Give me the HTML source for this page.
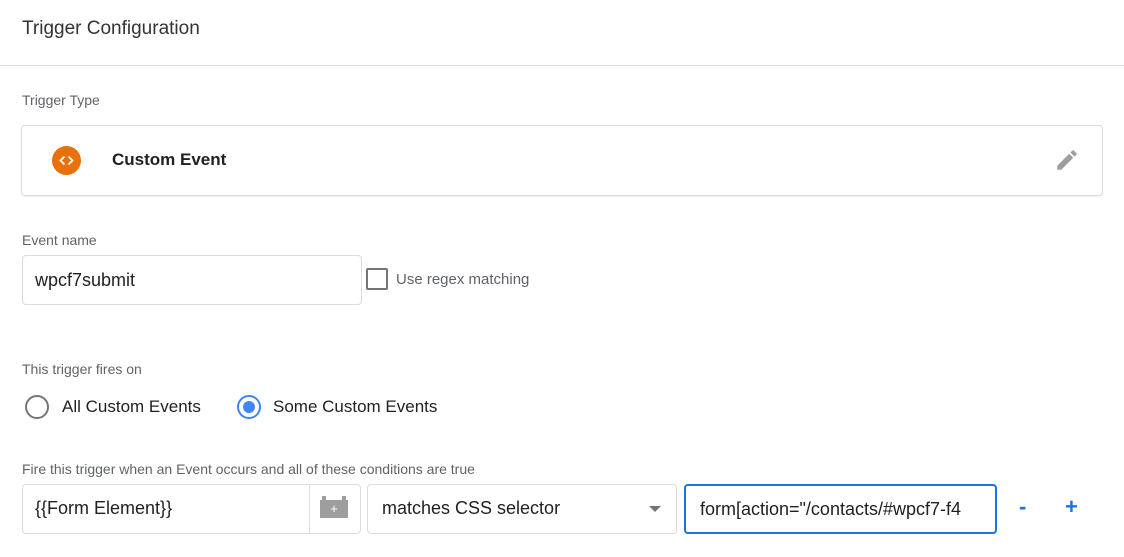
<!DOCTYPE html>
<html><head><style>
body{margin:0;width:1124px;height:557px;background:#fff;font-family:"Liberation Sans",Arial,sans-serif;position:relative;overflow:hidden;color:#202124}
.a{position:absolute}
.lbl{font-size:14px;color:#5f6368}
.box{position:absolute;border:1px solid #dadce0;border-radius:4px;box-sizing:border-box;background:#fff}
</style></head><body>
<div class="a" style="left:22px;top:18px;font-size:19px;color:#333">Trigger Configuration</div>
<div class="a" style="left:0;top:65px;width:1124px;height:1px;background:#dadce0"></div>
<div class="a lbl" style="left:22px;top:92px">Trigger Type</div>
<div class="box" style="left:21px;top:125px;width:1082px;height:71px;box-shadow:0 1px 1px rgba(0,0,0,.05)"></div>
<div class="a" style="left:52px;top:146px;width:29px;height:29px;border-radius:50%;background:#e8710a"></div>
<svg class="a" style="left:52px;top:146px" width="29" height="29" viewBox="0 0 29 29"><path d="M12.5 10.5L8.5 14.5L12.5 18.5M16.5 10.5L20.5 14.5L16.5 18.5" fill="none" stroke="#fff" stroke-width="1.8"/></svg>
<div class="a" style="left:112px;top:150px;font-size:17px;font-weight:bold;color:#202124">Custom Event</div>
<svg class="a" style="left:1054px;top:147px" width="26" height="26" viewBox="0 0 24 24"><path d="M3 17.25V21h3.75L17.81 9.94l-3.75-3.75L3 17.25zM20.71 7.04a1 1 0 0 0 0-1.41l-2.34-2.34a1 1 0 0 0-1.41 0l-1.83 1.83 3.75 3.75 1.83-1.83z" fill="#9e9e9e"/></svg>
<div class="a lbl" style="left:22px;top:232px">Event name</div>
<div class="box" style="left:22px;top:255px;width:340px;height:50px"></div>
<div class="a" style="left:35px;top:270px;font-size:18px">wpcf7submit</div>
<div class="a" style="left:366px;top:268px;width:18px;height:18px;border:2px solid #757575;border-radius:2px"></div>
<div class="a lbl" style="left:396px;top:271px;font-size:15px">Use regex matching</div>
<div class="a lbl" style="left:22px;top:361px">This trigger fires on</div>
<div class="a" style="left:25px;top:395px;width:20px;height:20px;border:2px solid #757575;border-radius:50%"></div>
<div class="a" style="left:62px;top:397px;font-size:17px">All Custom Events</div>
<div class="a" style="left:237px;top:395px;width:20px;height:20px;border:2px solid #4285f4;border-radius:50%"></div>
<div class="a" style="left:243px;top:401px;width:12px;height:12px;background:#4285f4;border-radius:50%"></div>
<div class="a" style="left:273px;top:397px;font-size:17px">Some Custom Events</div>
<div class="a lbl" style="left:22px;top:461px">Fire this trigger when an Event occurs and all of these conditions are true</div>
<div class="box" style="left:22px;top:484px;width:339px;height:50px"></div>
<div class="a" style="left:309px;top:485px;width:1px;height:48px;background:#e0e0e0"></div>
<div class="a" style="left:35px;top:498px;font-size:18px">{{Form Element}}</div>
<div class="a" style="left:320px;top:500px;width:28px;height:18px;background:#9e9e9e;color:#fff;font-size:13px;text-align:center;line-height:18px">+</div>
<div class="a" style="left:322px;top:496px;width:4px;height:4px;background:#9e9e9e"></div><div class="a" style="left:342px;top:496px;width:4px;height:4px;background:#9e9e9e"></div>
<div class="box" style="left:367px;top:484px;width:310px;height:50px"></div>
<div class="a" style="left:382px;top:498px;font-size:18px">matches CSS selector</div>
<div class="a" style="left:649px;top:506px;width:0;height:0;border-left:6px solid transparent;border-right:6px solid transparent;border-top:6px solid #757575"></div>
<div class="box" style="left:684px;top:484px;width:313px;height:50px;border:2px solid #1a73e8;overflow:hidden"><div style="position:absolute;left:14px;top:13px;font-size:18px;white-space:nowrap">form[action="/contacts/#wpcf7-f4</div></div>
<div class="a" style="left:1019px;top:494px;font-size:22px;color:#1a73e8;font-weight:bold">-</div>
<div class="a" style="left:1065px;top:494px;font-size:22px;color:#1a73e8;font-weight:bold">+</div>
</body></html>
